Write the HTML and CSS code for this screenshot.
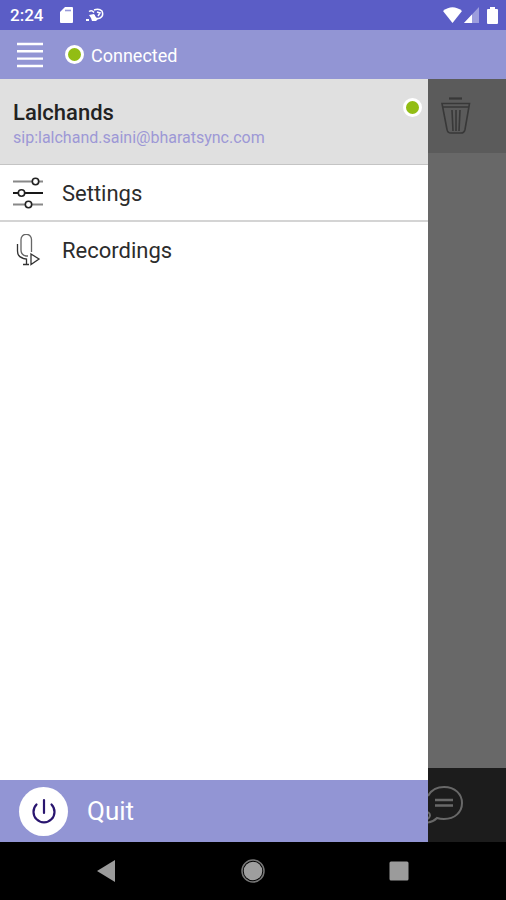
FILE: index.html
```html
<!DOCTYPE html>
<html lang="en">
<head>
<meta charset="utf-8">
<meta name="viewport" content="width=device-width, initial-scale=1">
<title>Connected</title>
<link rel="stylesheet" href="styles.css">
</head>
<body>
<div class="status-bar">
  <time class="clock">2:24</time>
  <svg class="sd-icon" width="14" height="16" viewBox="0 0 14 16" aria-hidden="true"><path fill="#fff" d="M5 0h7q1 0 1 1v14q0 1-1 1H1q-1 0-1-1V5z"/><path stroke="#9899da" stroke-width="1.600" d="M5 3.500h6"/></svg>
  <svg class="app-icon" width="18" height="14" viewBox="0 0 18 14" aria-hidden="true"><g fill="none" stroke="#fff" stroke-width="1.500"><path d="M3 3.500q3-2 5 1M8 2q5-2 8 1 2 5-2 7-5 2-6-3M11 4l3 1-2 3"/></g><path fill="#fff" d="M3 7l5-1 2 4 3 0-3 3H6L5 10zM0 11h3v2H0z"/></svg>
  <div class="signals">
    <svg width="19" height="16" viewBox="0 0 19 16" aria-hidden="true"><path fill="#fff" d="M0 4Q9.500-3.500 19 4L9.500 16z"/></svg>
    <svg width="15" height="16" viewBox="0 0 15 16" aria-hidden="true"><path fill="#fff" opacity=".4" d="M15 0v16H0z"/><path fill="#fff" d="M8 7.500V16H0z"/></svg>
    <svg class="battery" width="11" height="17" viewBox="0 0 11 17" aria-hidden="true"><path fill="#fff" d="M3 0h5v2h2q1 0 1 1v13q0 1-1 1H1q-1 0-1-1V3q0-1 1-1h2z"/></svg>
  </div>
</div>
<header class="app-bar">
  <button class="icon-button" type="button" aria-label="Menu">
    <svg width="26" height="26" viewBox="0 0 26 26"><path stroke="#fff" stroke-width="2.400" d="M0 2h26M0 9.300h26M0 16.600h26M0 24h26"/></svg>
  </button>
  <span class="dot"></span>
  <span class="connection">Connected</span>
</header>
<main class="content">
  <nav class="drawer">
    <div class="account">
      <div class="identity">
        <h1 class="name">Lalchands</h1>
        <p class="address">sip:lalchand.saini@bharatsync.com</p>
      </div>
      <span class="dot"></span>
    </div>
    <a class="entry" href="#settings">
      <svg width="32" height="32" viewBox="0 0 32 32" aria-hidden="true"><g fill="none" stroke-width="1.600"><path stroke="#888" stroke-width="2" d="M0 4.500h19M26 4.500h4M0 27.500h12M19 27.500h11"/><path stroke="#181818" stroke-width="2" d="M0 16h5M12 16h18"/><g stroke="#222"><circle cx="22.500" cy="4.500" r="3.200"/><circle cx="8.500" cy="16" r="3.200"/><circle cx="15.500" cy="27.500" r="3.200"/></g></g></svg>
      <span>Settings</span>
    </a>
    <a class="entry last" href="#recordings">
      <svg width="32" height="32" viewBox="0 0 32 32" aria-hidden="true"><g fill="none" stroke="#333" stroke-width="1.300"><path stroke="#666" d="M18.500 18V5.500A5.200 5.200 0 0 0 8 5.500V16q0 5 5 6h2"/><path d="M4.500 10v7q0 6 6 7.500l3 .500v5M10 30.500h6M18 20l8 5-8 5.500z"/></g></svg>
      <span>Recordings</span>
    </a>
    <button class="quit" type="button">
      <span class="power"><svg width="26" height="28" viewBox="0 0 26 28" aria-hidden="true"><path fill="none" stroke="#29156f" stroke-width="2.200" stroke-linecap="round" d="M13 3v13M5.500 7.500a10.500 10.500 0 1 0 15 0"/></svg></span>
      <span>Quit</span>
    </button>
  </nav>
  <aside class="backdrop">
    <div class="backdrop-top">
      <button class="icon-button" type="button" aria-label="Delete">
        <svg width="30" height="38" viewBox="0 0 30 38"><g fill="none" stroke="#383838" stroke-width="1.600"><path d="M8 1.500h13" stroke-width="2.200"/><path d="M1 6.500h27.500L24 32.500q-.700 3.500-4 3.500H10q-3.500 0-4-3.500zM2 10h26M11 13l1 21M15 13v21M19 13l-1 21"/></g></svg>
      </button>
    </div>
    <div class="backdrop-bottom">
      <button class="icon-button" type="button" aria-label="Messages">
        <svg width="36" height="40" viewBox="0 0 36 40"><g fill="none" stroke="#686868" stroke-width="2"><path d="M0 11Q5 2 16 2C27 2 34 9 34 18S27 34 16 34Q12 34 9 33Q5 37 0 37.500M0 27Q4 30 0 34"/><path d="M7 15h18M7 20.500h18" stroke-width="2.400"/></g></svg>
      </button>
    </div>
  </aside>
</main>
<footer class="system-nav">
  <button class="icon-button" type="button" aria-label="Back"><svg width="20" height="22" viewBox="0 0 20 22"><path fill="#9b9b9b" d="M19 0v22L1 11z"/></svg></button>
  <button class="icon-button" type="button" aria-label="Home"><svg width="24" height="24" viewBox="0 0 24 24"><circle cx="12" cy="12" r="11" fill="none" stroke="#777" stroke-width="1.500"/><circle cx="12" cy="12" r="9.300" fill="#9e9e9e"/></svg></button>
  <button class="icon-button" type="button" aria-label="Recent apps"><svg width="20" height="20" viewBox="0 0 20 20"><rect x=".500" y=".500" width="19" height="19" rx="1.500" fill="#9b9b9b"/></svg></button>
</footer>
</body>
</html>
```
FILE: styles.css
```css
* { box-sizing: border-box; }

body {
  display: flex;
  flex-direction: column;
  min-height: 100vh;
  margin: 0;
  background: #fff;
  color: #222;
  font-family: Roboto, "Liberation Sans", sans-serif;
}

svg { display: block; flex: none; }

button {
  border: 0;
  padding: 0;
  background: none;
  color: inherit;
  font: inherit;
  cursor: pointer;
}

.status-bar {
  display: flex;
  align-items: center;
  height: 30px;
  padding: 0 8px 0 10px;
  background: #5b5dc6;
  color: #fff;
}

.clock {
  font-size: 17px;
  font-weight: 500;
}

.sd-icon { margin-left: 17px; }
.app-icon { margin-left: 12px; }

.signals {
  display: flex;
  align-items: center;
  gap: 2px;
  margin-left: auto;
}

.battery { margin-left: 6px; }

.app-bar {
  display: flex;
  align-items: center;
  height: 49px;
  padding: 0 17px;
  background: #9295d4;
  color: #fff;
}

.app-bar .dot { margin: 0 7px 0 22px; }

.connection {
  font-size: 18px;
  line-height: 24px;
  padding-top: 2px;
}

.dot {
  flex: none;
  width: 19px;
  height: 19px;
  border: 3px solid #fff;
  border-radius: 50%;
  background: #92bd14;
}

.content {
  display: flex;
  flex: 1;
}

.drawer {
  display: flex;
  flex: 1;
  flex-direction: column;
  background: #fff;
}

.account {
  display: flex;
  align-items: flex-start;
  justify-content: space-between;
  height: 86px;
  padding: 19px 6px 0 13px;
  border-bottom: 1px solid #c4c4c4;
  background: #e0e0e0;
}

.name {
  margin: 0;
  font-size: 22px;
  font-weight: 500;
  line-height: 30px;
}

.address {
  margin: 0;
  color: #9d98d6;
  font-size: 16px;
  line-height: 20px;
}

.entry {
  display: flex;
  align-items: center;
  gap: 17px;
  height: 57px;
  padding: 1px 13px 0;
  border-bottom: 2px solid #d4d4d4;
  color: #2c2c2c;
  font-size: 22px;
  text-decoration: none;
}

.entry.last { border-bottom-color: transparent; }

.quit {
  display: flex;
  align-items: center;
  gap: 19px;
  height: 62px;
  margin-top: auto;
  padding: 0 19px;
  background: #9295d4;
  color: #fff;
  font-size: 26px;
}

.power {
  display: grid;
  place-items: center;
  width: 49px;
  height: 49px;
  border-radius: 50%;
  background: #fff;
}

.backdrop {
  display: flex;
  flex: none;
  flex-direction: column;
  justify-content: space-between;
  width: 78px;
  background: #686868;
}

.backdrop-top {
  display: flex;
  align-items: center;
  height: 74px;
  padding-left: 13px;
  background: #5b5b5b;
}

.backdrop-bottom {
  display: flex;
  align-items: center;
  height: 74px;
  background: #1c1c1c;
}

.system-nav {
  display: flex;
  align-items: center;
  justify-content: space-between;
  height: 58px;
  padding: 0 97px 0 96px;
  background: #000;
}
```
